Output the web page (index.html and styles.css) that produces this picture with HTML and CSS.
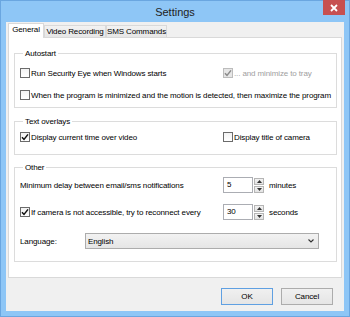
FILE: index.html
```html
<!DOCTYPE html>
<html lang="en">
<head>
    <meta charset="UTF-8">
    <meta name="viewport" content="width=device-width, initial-scale=1.0">
    <title>Settings</title>
    <link rel="stylesheet" href="styles.css">
</head>
<body>
    <div class="window">
        <div class="titlebar">
            <span class="title">Settings</span>
            <span class="close">
                <svg width="8" height="8" viewBox="0 0 8 8"><path d="M1 1L7 7M7 1L1 7" stroke="#fff" stroke-width="1.8"/></svg>
            </span>
        </div>

        <div class="client">
            <div class="tabs">
                <div class="tab tab-general active">General</div>
                <div class="tab tab-video">Video Recording</div>
                <div class="tab tab-sms">SMS Commands</div>
            </div>

            <div class="page">
                <div class="group autostart">
                    <div class="group-title">Autostart</div>
                    <div class="group-body">
                        <div class="row split">
                            <label class="check"><span class="box"></span>Run Security Eye when Windows starts</label>
                            <label class="check disabled">
                                <span class="box checked"><svg width="8" height="8" viewBox="0 0 8 8"><path d="M1 4.2L3 6.4L7 1.4" fill="none" stroke="#8a8a8a" stroke-width="1.5"/></svg></span>... and minimize to tray
                            </label>
                        </div>
                        <div class="row">
                            <label class="check"><span class="box"></span>When the program is minimized and the motion is detected, then maximize the program</label>
                        </div>
                    </div>
                </div>

                <div class="group overlays">
                    <div class="group-title">Text overlays</div>
                    <div class="group-body">
                        <div class="row split">
                            <label class="check">
                                <span class="box checked"><svg width="8" height="8" viewBox="0 0 8 8"><path d="M1 4.2L3 6.4L7 1.4" fill="none" stroke="#111" stroke-width="1.5"/></svg></span>Display current time over video
                            </label>
                            <label class="check"><span class="box"></span>Display title of camera</label>
                        </div>
                    </div>
                </div>

                <div class="group other">
                    <div class="group-title">Other</div>
                    <div class="group-body">
                        <div class="row split">
                            <span>Minimum delay between email/sms notifications</span>
                            <div class="spin">
                                <span class="spin-input">5</span>
                                <span class="spin-btns">
                                    <span class="spin-btn"><svg width="5" height="3" viewBox="0 0 5 3"><path d="M0 3L2.5 0L5 3Z" fill="#333"/></svg></span>
                                    <span class="spin-btn"><svg width="5" height="3" viewBox="0 0 5 3"><path d="M0 0L2.5 3L5 0Z" fill="#333"/></svg></span>
                                </span>
                                <span class="unit">minutes</span>
                            </div>
                        </div>
                        <div class="row split">
                            <label class="check">
                                <span class="box checked"><svg width="8" height="8" viewBox="0 0 8 8"><path d="M1 4.2L3 6.4L7 1.4" fill="none" stroke="#111" stroke-width="1.5"/></svg></span>If camera is not accessible, try to reconnect every
                            </label>
                            <div class="spin">
                                <span class="spin-input">30</span>
                                <span class="spin-btns">
                                    <span class="spin-btn"><svg width="5" height="3" viewBox="0 0 5 3"><path d="M0 3L2.5 0L5 3Z" fill="#333"/></svg></span>
                                    <span class="spin-btn"><svg width="5" height="3" viewBox="0 0 5 3"><path d="M0 0L2.5 3L5 0Z" fill="#333"/></svg></span>
                                </span>
                                <span class="unit">seconds</span>
                            </div>
                        </div>
                        <div class="row lang">
                            <span>Language:</span>
                            <div class="combo">
                                <span>English</span>
                                <svg width="6" height="4" viewBox="0 0 6 4"><path d="M0.5 0.5L3 3L5.5 0.5" fill="none" stroke="#333" stroke-width="1.1"/></svg>
                            </div>
                        </div>
                    </div>
                </div>
            </div>

            <div class="buttons">
                <button class="btn default">OK</button>
                <button class="btn">Cancel</button>
            </div>
        </div>
    </div>
</body>
</html>
```

FILE: styles.css
```css
* {
    box-sizing: border-box;
}

body {
    margin: 0;
    font-family: "Liberation Sans", Arial, sans-serif;
    font-size: 8px;
    letter-spacing: -0.12px;
    color: #000;
}

.window {
    position: relative;
    width: 350px;
    height: 317px;
    border: 1px solid #6aa6e0;
    background-color: #8ec6f6;
    padding: 0 5px 5px;
    display: flex;
    flex-direction: column;
}

.titlebar {
    height: 21px;
    display: flex;
    align-items: center;
    justify-content: center;
}

.title {
    font-size: 11px;
    letter-spacing: 0;
    color: #222;
}

.close {
    position: absolute;
    top: -1px;
    left: 322px;
    width: 22px;
    height: 15px;
    background-color: #c75050;
    display: flex;
    align-items: center;
    justify-content: center;
}

.client {
    flex: 1;
    background-color: #f0f0f0;
    display: flex;
    flex-direction: column;
    padding: 1px 2px 0;
}

.tabs {
    display: flex;
    align-items: flex-end;
    height: 14px;
    position: relative;
    z-index: 1;
}

.tab {
    height: 12px;
    border: 1px solid #d9d9d9;
    border-bottom: none;
    background: linear-gradient(#f2f2f2, #e6e6e6);
    text-align: center;
    line-height: 11px;
    white-space: nowrap;
}

.tab-general {
    width: 36px;
}

.tab-video {
    width: 62px;
}

.tab-sms {
    width: 61px;
}

.tab.active {
    height: 15px;
    margin-bottom: -1px;
    background: #fff;
    line-height: 11px;
}

.page {
    height: 241px;
    background-color: #fff;
    border: 1px solid #d9d9d9;
    padding: 15px 4px 0 5px;
}

.group {
    border: 1px solid #dcdcdc;
    padding: 0 5px;
}

.group + .group {
    margin-top: 13px;
}

.group.other {
    margin-top: 12px;
}

.group-title {
    width: max-content;
    height: 11px;
    line-height: 11px;
    margin: -6px 0 -5px 3px;
    padding: 0 2px;
    background-color: #fff;
}

.autostart .group-body {
    padding: 8px 0 1px;
}

.overlays .group-body {
    padding: 4px 0 6px;
}

.other .group-body {
    padding: 6px 0 9px;
}

.other .row:nth-child(2) {
    margin-top: 5px;
}

.other .row:nth-child(3) {
    margin-top: 7px;
}

.row {
    height: 22px;
    display: flex;
    align-items: center;
    white-space: nowrap;
}

.row.split {
    display: grid;
    grid-template-columns: 203px auto;
    align-items: center;
}

.row.lang {
    display: grid;
    grid-template-columns: 65px 234px;
    align-items: center;
}

.check {
    display: flex;
    align-items: center;
    gap: 1px;
}

.box {
    width: 10px;
    height: 10px;
    border: 1px solid #6b6b6b;
    background: linear-gradient(#f3f3f3, #fff);
    display: flex;
    align-items: center;
    justify-content: center;
}

.check.disabled {
    color: #a0a0a0;
}

.check.disabled .box {
    border-color: #bcbcbc;
    background: #e6e6e6;
}

.spin {
    display: flex;
    align-items: center;
}

.spin-input {
    width: 30px;
    height: 16px;
    border: 1px solid #abadb3;
    background-color: #fff;
    padding-left: 3px;
    line-height: 14px;
}

.spin-btns {
    margin-left: 1px;
    display: flex;
    flex-direction: column;
    gap: 1px;
}

.spin-btn {
    width: 10px;
    height: 7px;
    border: 1px solid #b5b5b5;
    background: linear-gradient(#f2f2f2, #e3e3e3);
    display: flex;
    align-items: center;
    justify-content: center;
}

.unit {
    margin-left: 5px;
}

.combo {
    height: 16px;
    border: 1px solid #acacac;
    background: linear-gradient(#f2f2f2, #e5e5e5);
    display: flex;
    align-items: center;
    justify-content: space-between;
    padding: 0 4px 0 2px;
}

.buttons {
    flex: 1;
    display: flex;
    justify-content: flex-end;
    align-items: flex-start;
    gap: 8px;
    padding: 10px 9px 0 0;
}

.btn {
    width: 52px;
    height: 17px;
    padding: 0;
    border: 1px solid #acacac;
    background: linear-gradient(#f0f0f0, #e5e5e5);
    font-family: inherit;
    font-size: 8px;
    letter-spacing: inherit;
    color: #000;
}

.btn.default {
    border-color: #5fa0e2;
}
```
